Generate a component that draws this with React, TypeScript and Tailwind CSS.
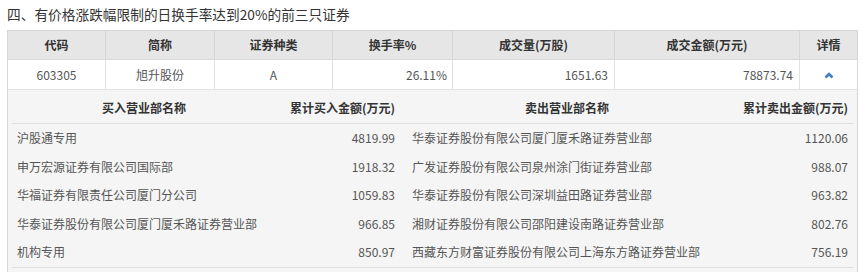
import React from 'react';

const columns = [
  { label: '代码', w: 'w-[98px]' },
  { label: '简称', w: 'w-[109px]' },
  { label: '证券种类', w: 'w-[118px]' },
  { label: '换手率%', w: 'w-[120px]' },
  { label: '成交量(万股)', w: 'w-[162px]' },
  { label: '成交金额(万元)', w: 'w-[185px]' },
  { label: '详情', w: 'flex-1' },
];

const deals = [
  ['沪股通专用', '4819.99', '华泰证券股份有限公司厦门厦禾路证券营业部', '1120.06'],
  ['申万宏源证券有限公司国际部', '1918.32', '广发证券股份有限公司泉州涂门街证券营业部', '988.07'],
  ['华福证券有限责任公司厦门分公司', '1059.83', '华泰证券股份有限公司深圳益田路证券营业部', '963.82'],
  ['华泰证券股份有限公司厦门厦禾路证券营业部', '966.85', '湘财证券股份有限公司邵阳建设南路证券营业部', '802.76'],
  ['机构专用', '850.97', '西藏东方财富证券股份有限公司上海东方路证券营业部', '756.19'],
];

function ChevronUp() {
  return (
    <svg width="12" height="8" viewBox="0 0 12 8">
      <path d="M2.5 6.5L6 3L9.5 6.5" fill="none" stroke="#3d7ec4" strokeWidth="2.6" strokeLinecap="butt" />
    </svg>
  );
}

export default function App() {
  return (
    <div
      className="w-[865px] h-[272px] bg-white overflow-hidden text-[#333]"
      style={{ fontFamily: '"Microsoft YaHei", "Noto Sans CJK SC", sans-serif' }}
    >
      <div className="px-[7px] pt-[4px] h-[30px] text-[13.7px] leading-[20px]">
        四、有价格涨跌幅限制的日换手率达到20%的前三只证券
      </div>

      <div className="mx-[7px] w-[851px] border-x border-[#d6d6d6]">
        <div className="flex h-[30px] bg-[#e6e6e6] border-y border-[#d6d6d6] text-[12px] font-bold">
          {columns.map((c, i) => (
            <div
              key={c.label}
              className={`${c.w} flex items-center justify-center ${i < columns.length - 1 ? 'border-r border-[#d6d6d6]' : ''}`}
            >
              {c.label}
            </div>
          ))}
        </div>

        <div className="flex h-[30px] border-b border-[#e2e2e2] text-[12px] text-[#555]">
          <div className="w-[98px] flex items-center justify-center border-r border-[#e2e2e2]">603305</div>
          <div className="w-[109px] flex items-center justify-center border-r border-[#e2e2e2]">旭升股份</div>
          <div className="w-[118px] flex items-center justify-center border-r border-[#e2e2e2]">A</div>
          <div className="w-[120px] flex items-center justify-end pr-[5px] border-r border-[#e2e2e2]">26.11%</div>
          <div className="w-[162px] flex items-center justify-end pr-[6px] border-r border-[#e2e2e2]">1651.63</div>
          <div className="w-[185px] flex items-center justify-end pr-[6px] border-r border-[#e2e2e2]">78873.74</div>
          <div className="flex-1 flex items-center justify-center">
            <ChevronUp />
          </div>
        </div>

        <div className="bg-[#f5f5f5] px-[4px] pt-[3px] h-[200px]">
          <div className="flex h-[31px] border-b border-[#e0e0e0] text-[12px] font-bold">
            <div className="w-[264px] flex items-center justify-center">买入营业部名称</div>
            <div className="w-[124px] flex items-center justify-end pr-[5px]">累计买入金额(万元)</div>
            <div className="w-[334px] flex items-center justify-center">卖出营业部名称</div>
            <div className="flex-1 flex items-center justify-end pr-[5px]">累计卖出金额(万元)</div>
          </div>
          <div className="border-b border-[#e0e0e0] text-[12px] text-[#555]">
            {deals.map((d) => (
              <div key={d[0] + d[2]} className="flex h-[28.5px] items-center">
                <div className="w-[264px] pl-[5px]">{d[0]}</div>
                <div className="w-[124px] text-right pr-[5px]">{d[1]}</div>
                <div className="w-[334px] pl-[12px]">{d[2]}</div>
                <div className="flex-1 text-right pr-[5px]">{d[3]}</div>
              </div>
            ))}
          </div>
        </div>
      </div>
    </div>
  );
}
